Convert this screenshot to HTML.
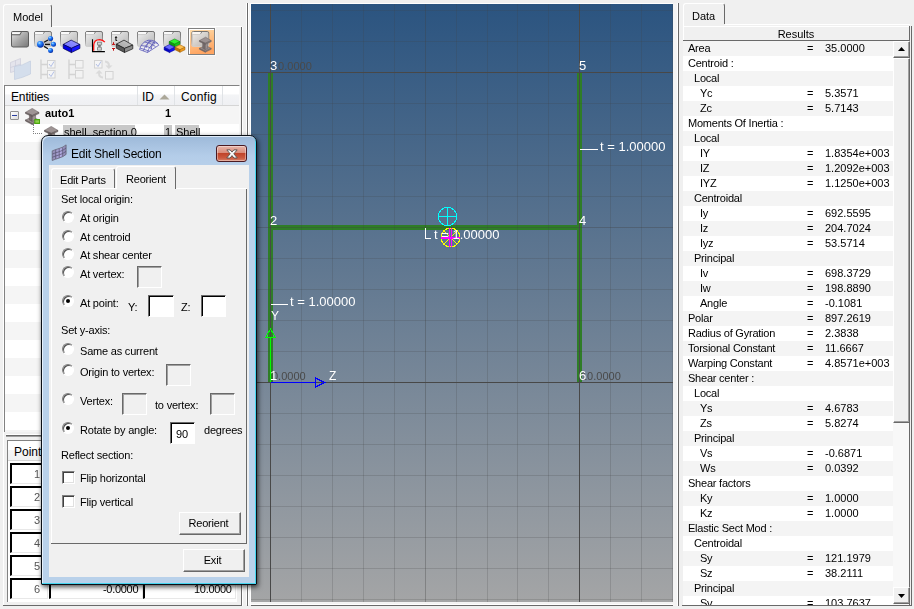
<!DOCTYPE html>
<html><head><meta charset="utf-8">
<style>
*{box-sizing:border-box;margin:0;padding:0}
html,body{width:914px;height:609px;overflow:hidden;background:#f0f0f0}
body{position:relative;font-family:"Liberation Sans",sans-serif;font-size:11px;color:#000}
.a{position:absolute}
.t{position:absolute;white-space:nowrap;line-height:1;will-change:transform}
.lcd{will-change:auto}
.btn{will-change:transform}
/* viewport */
#vp{left:251px;top:4px;width:422px;height:598px;background:linear-gradient(#2b5480 0%,#a4a5a6 100%);overflow:hidden}
#vp .t{color:#fff}
</style></head><body>
<!-- ============ VIEWPORT ============ -->
<div id="vp" class="a">
<svg class="a" style="left:0;top:0" width="422" height="598" shape-rendering="crispEdges"><rect x="17" y="69" width="5" height="309" fill="#2f7d27"/>
<rect x="326" y="69" width="5" height="309" fill="#2f7d27"/>
<rect x="20" y="221" width="308" height="5" fill="#2f7d27"/>
<rect x="19" y="0" width="1" height="598" fill="#484848" opacity="1"/>
<rect x="50" y="0" width="1" height="598" fill="#404040" opacity="0.2"/>
<rect x="81" y="0" width="1" height="598" fill="#404040" opacity="0.2"/>
<rect x="112" y="0" width="1" height="598" fill="#404040" opacity="0.2"/>
<rect x="143" y="0" width="1" height="598" fill="#404040" opacity="0.2"/>
<rect x="174" y="0" width="1" height="598" fill="#404040" opacity="0.33"/>
<rect x="205" y="0" width="1" height="598" fill="#404040" opacity="0.2"/>
<rect x="236" y="0" width="1" height="598" fill="#404040" opacity="0.2"/>
<rect x="266" y="0" width="1" height="598" fill="#404040" opacity="0.2"/>
<rect x="297" y="0" width="1" height="598" fill="#404040" opacity="0.2"/>
<rect x="328" y="0" width="1" height="598" fill="#484848" opacity="1"/>
<rect x="359" y="0" width="1" height="598" fill="#404040" opacity="0.2"/>
<rect x="390" y="0" width="1" height="598" fill="#404040" opacity="0.2"/>
<rect x="421" y="0" width="1" height="598" fill="#404040" opacity="0.2"/>
<rect x="0" y="6" width="422" height="1" fill="#404040" opacity="0.2"/>
<rect x="0" y="37" width="422" height="1" fill="#404040" opacity="0.2"/>
<rect x="0" y="68" width="422" height="1" fill="#484848" opacity="1"/>
<rect x="0" y="99" width="422" height="1" fill="#404040" opacity="0.2"/>
<rect x="0" y="130" width="422" height="1" fill="#404040" opacity="0.2"/>
<rect x="0" y="161" width="422" height="1" fill="#404040" opacity="0.2"/>
<rect x="0" y="192" width="422" height="1" fill="#404040" opacity="0.2"/>
<rect x="0" y="223" width="422" height="1" fill="#404040" opacity="0.33"/>
<rect x="0" y="254" width="422" height="1" fill="#404040" opacity="0.2"/>
<rect x="0" y="285" width="422" height="1" fill="#404040" opacity="0.2"/>
<rect x="0" y="316" width="422" height="1" fill="#404040" opacity="0.2"/>
<rect x="0" y="347" width="422" height="1" fill="#404040" opacity="0.2"/>
<rect x="0" y="378" width="422" height="1" fill="#484848" opacity="1"/>
<rect x="0" y="409" width="422" height="1" fill="#404040" opacity="0.2"/>
<rect x="0" y="440" width="422" height="1" fill="#404040" opacity="0.2"/>
<rect x="0" y="471" width="422" height="1" fill="#404040" opacity="0.2"/>
<rect x="0" y="502" width="422" height="1" fill="#404040" opacity="0.2"/>
<rect x="0" y="533" width="422" height="1" fill="#404040" opacity="0.2"/>
<rect x="0" y="564" width="422" height="1" fill="#404040" opacity="0.2"/>
<rect x="0" y="595" width="422" height="1" fill="#404040" opacity="0.2"/>
<rect x="19" y="334" width="1" height="44" fill="#00ff00"/>
<path d="M19.5 325 L14.5 333.5 L24.5 333.5 Z" fill="none" stroke="#00ff00" stroke-width="1"/>
<rect x="20" y="378" width="45" height="1" fill="#0000ff"/>
<path d="M73.5 378.5 L64.5 374 L64.5 383 Z" fill="none" stroke="#0000ff" stroke-width="1"/>
<rect x="20" y="300" width="17" height="1" fill="#fff"/>
<rect x="329" y="145" width="18" height="1" fill="#fff"/>
<rect x="174" y="224" width="1" height="11" fill="#fff"/>
<rect x="174" y="234" width="6" height="1" fill="#fff"/>
<g fill="none" stroke="#00ffff" stroke-width="1"><circle cx="196.5" cy="212.5" r="9.2"/><path d="M187.3 212.5H205.7M196.5 203.3V221.7"/></g>
<g fill="none" stroke="#ffff00" stroke-width="1"><circle cx="199.5" cy="233.5" r="9.4"/><path d="M192.85326 226.85326L206.14674 240.14674M206.14674 226.85326L192.85326 240.14674"/></g>
<g fill="none" stroke="#ff00ff" stroke-width="1"><path d="M198.5 224.1V242.9M200.5 224.1V242.9M190.1 233.0H208.9M190.1 234.0H208.9"/></g></svg>
<div class="t" style="left:20.5px;top:56.9px;font-size:11px;color:#4a4a4a">10.0000</div>
<div class="t" style="left:18.5px;top:55.2px;font-size:13px;color:#fff">3</div>
<div class="t" style="left:327.5px;top:55.2px;font-size:13px;color:#fff">5</div>
<div class="t" style="left:18.5px;top:210.2px;font-size:13px;color:#fff">2</div>
<div class="t" style="left:327.5px;top:210.2px;font-size:13px;color:#fff">4</div>
<div class="t" style="left:21px;top:366.9px;font-size:11px;color:#4a4a4a">0.0000</div>
<div class="t" style="left:18.5px;top:365.2px;font-size:13px;color:#fff">1</div>
<div class="t" style="left:329.5px;top:366.9px;font-size:11px;color:#4a4a4a">10.0000</div>
<div class="t" style="left:327.5px;top:365.2px;font-size:13px;color:#fff">6</div>
<div class="t" style="left:20px;top:306.0px;font-size:12px;color:#fff">Y</div>
<div class="t" style="left:77.5px;top:366.0px;font-size:12px;color:#fff">Z</div>
<div class="t" style="left:39px;top:291.2px;font-size:13px;color:#fff">t = 1.00000</div>
<div class="t" style="left:349px;top:136.2px;font-size:13px;color:#fff">t = 1.00000</div>
<div class="t" style="left:183px;top:224.2px;font-size:13px;color:#fff">t = 1.00000</div>
</div>
<!--LEFT-->
<!-- ============ LEFT PANEL ============ -->
<style>
.hl{background:#fff}.dk{background:#696969}.sh{background:#a0a0a0}
.tab{border-top:1px solid #fff;border-left:1px solid #fff;border-right:1px solid #696969;border-radius:3px 3px 0 0;background:#f0f0f0}
</style>
<!-- outer separator -->
<div class="a dk" style="left:247px;top:3px;width:1px;height:603px"></div>
<div class="a" style="left:248px;top:3px;width:3px;height:602px;background:linear-gradient(90deg,#fff 0,#fff 1px,#f3f3f3 1px,#f3f3f3 2px,#fff 2px)"></div>
<div class="a" style="left:250px;top:3px;width:424px;height:1px;background:#fff"></div>
<div class="a" style="left:251px;top:602px;width:422px;height:3px;background:linear-gradient(#f3f3f3 0,#f3f3f3 2px,#fff 2px)"></div>
<div class="a hl" style="left:246px;top:3px;width:1px;height:602px"></div>
<div class="a" style="left:673px;top:3px;width:4px;height:603px;background:#f4f4f4"></div>
<div class="a dk" style="left:251px;top:605px;width:422px;height:1px"></div>
<div class="a hl" style="left:242px;top:27px;width:1px;height:579px"></div>
<!-- Model tab -->
<div class="a tab" style="left:3px;top:4px;width:49px;height:23px"></div>
<div class="t" style="left:13px;top:12px;font-size:11px">Model</div>
<div class="a hl" style="left:52px;top:26px;width:190px;height:1px"></div>
<div class="a hl" style="left:3px;top:26px;width:1px;height:579px"></div>
<div class="a dk" style="left:241px;top:27px;width:1px;height:579px"></div>
<div class="a dk" style="left:3px;top:605px;width:239px;height:1px"></div>
<!--TOOLBAR-->
<svg class="a" style="left:4px;top:27px;will-change:transform" width="237" height="58" viewBox="4 27 237 58">
<defs>
<linearGradient id="fg" x1="0" y1="0" x2="1" y2="1"><stop offset="0" stop-color="#e6e6e6"/><stop offset=".5" stop-color="#a9a9a9"/><stop offset="1" stop-color="#787878"/></linearGradient>
<linearGradient id="fg2" x1="0" y1="0" x2="1" y2="1"><stop offset="0" stop-color="#f2f2f2"/><stop offset=".5" stop-color="#d2d2d2"/><stop offset="1" stop-color="#b4b4b4"/></linearGradient>
<linearGradient id="fs2" x1="0" y1="0" x2="0" y2="1"><stop offset="0" stop-color="#6c6c6c"/><stop offset=".6" stop-color="#9a9a9a"/><stop offset="1" stop-color="#d0d0d0"/></linearGradient>
<linearGradient id="og" x1="0" y1="0" x2=".3" y2="1"><stop offset="0" stop-color="#ffe2b2"/><stop offset=".5" stop-color="#ffc388"/><stop offset="1" stop-color="#ffa562"/></linearGradient>
<radialGradient id="sp" cx=".36" cy=".3" r=".75"><stop offset="0" stop-color="#b8e6ff"/><stop offset=".3" stop-color="#2f8fff"/><stop offset=".75" stop-color="#0b48cc"/><stop offset="1" stop-color="#08288c"/></radialGradient>
<linearGradient id="bt" x1="0" y1="1" x2="1" y2="0"><stop offset="0" stop-color="#6a6aff"/><stop offset="1" stop-color="#9c9cff"/></linearGradient>
<linearGradient id="gt" x1="0" y1="1" x2="1" y2="0"><stop offset="0" stop-color="#a4a4a4"/><stop offset="1" stop-color="#c8c8c8"/></linearGradient>
<g id="fold"><rect x=".5" y=".5" width="17" height="15" rx="1.6" stroke-width="1"/><path d="M1.1 1.1H10.2L9 3.1H1.1Z" fill="#fafafa" stroke="none"/><path d="M.8 3.6H8.8L10.4 1" fill="none" stroke-width="1"/></g>
</defs>
<!-- 1 plain folder -->
<g transform="translate(11,31) scale(1,1.03)" fill="url(#fg)" stroke="#5e5e5e"><use href="#fold"/></g>
<!-- 2 folder + spheres -->
<g transform="translate(34,31)" fill="url(#fg2)" stroke="url(#fs2)"><use href="#fold"/></g>
<path d="M44 42.2L48 40M45 44.3H50M44 46.4L48 48.8" stroke="#111" stroke-width="1.3" fill="none"/>
<circle cx="40.4" cy="44.3" r="3.4" fill="url(#sp)"/><circle cx="50.6" cy="38.4" r="2.5" fill="url(#sp)"/><circle cx="53.5" cy="44.3" r="2.5" fill="url(#sp)"/><circle cx="50.6" cy="50.4" r="2.5" fill="url(#sp)"/>
<!-- 3 folder + blue box -->
<g transform="translate(60,31)" fill="url(#fg2)" stroke="url(#fs2)"><use href="#fold"/></g>
<g stroke="#00004a" stroke-width=".7" stroke-linejoin="round"><path d="M63.2 44.4L71.1 40.1L79.9 44.4L71.4 48.3Z" fill="url(#bt)"/><path d="M63.2 44.4L71.4 48.3V52.6L63.2 48.4Z" fill="#0000e6"/><path d="M79.9 44.4L71.4 48.3V52.6L79.9 48.4Z" fill="#1414ff"/></g>
<!-- 4 folder + arc -->
<g transform="translate(85,31)" fill="url(#fg2)" stroke="url(#fs2)"><use href="#fold"/></g>
<path d="M93 51V44Q93.5 40 99.5 39.8Q103 40 104.6 42.5V51Z" fill="#eef4f4" opacity=".8"/>
<path d="M92.5 39.2V51.6H104.9" stroke="#000" stroke-width="1.1" fill="none"/>
<path d="M93.7 50.7V45Q94 39.6 99.6 39.6Q103 39.8 104.8 42.2" stroke="#ff1010" stroke-width="1.3" fill="none"/>
<path d="M97.1 41.8h4.7v3l-1.4 1.4 1.4 1.4v3h-4.7v-3l1.4-1.4-1.4-1.4z" fill="#7e7e7e"/><rect x="98" y="42.6" width="2.9" height="2" fill="#d4d4d4"/><rect x="98" y="47.6" width="2.9" height="2.2" fill="#d4d4d4"/>
<!-- 5 folder + t + gray box -->
<g transform="translate(111,31)" fill="url(#fg2)" stroke="url(#fs2)"><use href="#fold"/></g>
<text x="114.8" y="40.8" font-family="Liberation Sans" font-weight="bold" font-size="8" fill="#000" stroke="#f4f4f4" stroke-width=".8" paint-order="stroke">t</text>
<path d="M113.5 42.2V44.4M112 44.4h3.1M112 48.5h3.1M113.5 48.5V50.7" stroke="#c41010" stroke-width="1" fill="none"/>
<g stroke="#161616" stroke-width=".7" stroke-linejoin="round"><path d="M116.3 44.2L124 40.1L132.8 45.1L124.5 48.4Z" fill="url(#gt)"/><path d="M116.3 44.2L124.5 48.4V52.5L116.3 48.2Z" fill="#585858"/><path d="M132.8 45.1L124.5 48.4V52.5L132.8 48.8Z" fill="#8c8c8c"/></g>
<!-- 6 folder + wire dome -->
<g transform="translate(137,31)" fill="url(#fg2)" stroke="url(#fs2)"><use href="#fold"/></g>
<g stroke="#5c5ab8" stroke-width=".8" fill="rgba(238,238,250,.55)" stroke-linejoin="round">
<path d="M139.5 49.5Q141.5 42 148.5 40.2Q156 39.8 158.8 45.2L147.5 52.5Z"/>
<path d="M143.5 51Q145 44 151 41.5M147.5 52.5Q148.5 46.5 155 43M141 45.5Q146 45.5 152 48.5M144.5 42Q150 42.5 155.5 46.5M147 40.6L158 43.5M140 48L149.5 51.2M150.5 40.1Q147 43 146 48M154.5 40.8Q151.5 44 151 49.5" fill="none"/>
</g>
<!-- 7 folder + 3 boxes -->
<g transform="translate(163,31)" fill="url(#fg2)" stroke="url(#fs2)"><use href="#fold"/></g>
<g stroke-width=".5" stroke-linejoin="round">
<g stroke="#067006"><path d="M169.2 41.6L174.6 38.9L180 41.6L174.6 44.2Z" fill="#30f030"/><path d="M169.2 41.6L174.6 44.2V46.8L169.2 44.2Z" fill="#0ca00c"/><path d="M180 41.6L174.6 44.2V46.8L180 44.2Z" fill="#12c812"/></g>
<g stroke="#000090"><path d="M164.1 47.2L169.5 44.5L174.8 47.2L169.5 49.9Z" fill="#6666ff"/><path d="M164.1 47.2L169.5 49.9V52.6L164.1 49.9Z" fill="#0000c8"/><path d="M174.8 47.2L169.5 49.9V52.6L174.8 49.9Z" fill="#1010ee"/></g>
<g stroke="#9a5a00"><path d="M175 47.2L180 44.8L185 47.2L180 49.7Z" fill="#ffc050"/><path d="M175 47.2L180 49.7V52.3L175 49.8Z" fill="#c07408"/><path d="M185 47.2L180 49.7V52.3L185 49.8Z" fill="#ee9818"/></g>
</g>
<!-- 8 selected -->
<rect x="188.5" y="28.5" width="26" height="26" fill="url(#og)" stroke="#808080" stroke-width="1"/>
<path d="M189.5 54V29.5H214" stroke="#fff" stroke-width="1" fill="none"/>
<rect x="187.5" y="27.5" width="28" height="28" fill="none" stroke="#fafafa" stroke-width="1"/>
<g transform="translate(191.3,31)" fill="url(#fg2)" stroke="url(#fs2)" opacity=".92"><use href="#fold"/></g>
<g stroke="#6c6262" stroke-width=".5" stroke-linejoin="round">
<path d="M199.4 48.3L205.3 45.4L211.2 48.3L205.3 51.2Z" fill="#9a9090"/><path d="M199.4 48.3L205.3 51.2V52.2L199.4 49.3Z" fill="#6e6565"/><path d="M211.2 48.3L205.3 51.2V52.2L211.2 49.3Z" fill="#857c7c"/>
<path d="M202.7 42.4L205.3 43.6V49.6L202.7 48.4Z" fill="#766c6c"/><path d="M207.6 42.4L205.3 43.6V49.6L207.6 48.4Z" fill="#9a9090"/>
<path d="M199.4 40.6L205.6 37.2L211.2 40.6L205.3 43.2Z" fill="#9c9292"/><path d="M199.4 40.6L205.3 43.2V44.3L199.4 41.7Z" fill="#6e6565"/><path d="M211.2 40.6L205.3 43.2V44.3L211.2 41.7Z" fill="#857c7c"/>
</g>
<!-- row 2 disabled -->
<g opacity=".6">
<path d="M10.5 62.5L20.5 58.5V69.5L10.5 72.5Z" fill="#dcdcea" stroke="#b4b4cc" stroke-width=".7"/><path d="M10.5 67.5L20.5 64M15.5 60.5V71" stroke="#b4b4cc" stroke-width=".7" fill="none"/>
<path d="M14.5 66.5Q22 66 30.5 61V74Q22 78 14.5 79.5Z" fill="#c2d2ea" stroke="#a4b6d4" stroke-width=".7"/>
</g>
<g opacity=".6" fill="none" stroke="#c0c0c0">
<path d="M41 59.5V79M41 64.5H47M41 74.5H47" stroke-width="1.4"/><rect x="47.5" y="60.5" width="7.5" height="7.5" fill="#f8f8f8"/><rect x="47.5" y="70.5" width="7.5" height="7.5" fill="#f8f8f8"/>
<path d="M49 64L51 66.5L54 61.5M49 74L51 76.5L54 71.5" stroke="#8aa0e0" stroke-width="1"/>
<path d="M69 59.5V79M69 64.5H75M69 74.5H75" stroke-width="1.4"/><rect x="75.5" y="60.5" width="7.5" height="7.5" fill="#f4f4f4"/><rect x="75.5" y="70.5" width="7.5" height="7.5" fill="#f4f4f4"/>
<rect x="94.5" y="60.5" width="7.5" height="7.5" fill="#f8f8f8"/><path d="M96 64L98 66.5L101 61.5" stroke="#8aa0e0" stroke-width="1"/>
<rect x="105.5" y="71.5" width="7.5" height="7.5" fill="#f4f4f4"/>
<path d="M105 60.5Q110 61 110 65.5H112.5L108.8 69L105.5 65.5H108Q108 63 105 62.5Z" fill="#cccccc" stroke="none"/>
<path d="M103 78.5Q98 78 98 73.5H95.5L99.2 70L102.5 73.5H100Q100 76 103 76.5Z" fill="#cccccc" stroke="none"/>
</g>
</svg>
<!--/TOOLBAR-->
<!-- tree frame -->
<div class="a" style="left:4px;top:85px;width:236px;height:347px;border-top:1px solid #828282;border-left:1px solid #828282;border-right:1px solid #f8f8f8;background:#fff;overflow:hidden">
  <div class="a" style="left:0;top:0;width:236px;height:20px;background:linear-gradient(#fff 0%,#fff 42%,#f3f4f6 47%,#eff0f3 100%);border-bottom:1px solid #d5d5d5"></div>
  <div class="a" style="left:132px;top:0;width:1px;height:19px;background:#e0e3e6"></div>
  <div class="a" style="left:169px;top:0;width:1px;height:19px;background:#e0e3e6"></div>
  <div class="a" style="left:217px;top:0;width:1px;height:19px;background:#e0e3e6"></div>
  <div class="t lcd" style="left:6px;top:5px;font-size:12px;letter-spacing:-0.15px">Entities</div>
  <div class="t lcd" style="left:137px;top:5px;font-size:12px">ID</div>
  <svg class="a" style="left:154px;top:8px" width="11" height="6"><path d="M0.5 5.5L5.5 0.5L10.5 5.5Z" fill="#aca899"/></svg>
  <div class="t lcd" style="left:176px;top:5px;font-size:12px;letter-spacing:0.2px">Config</div>
  <!-- stripes -->
  <div class="a" style="left:0;top:20px;width:236px;height:330px;background:repeating-linear-gradient(#f5f5f5 0,#f5f5f5 18px,#fff 18px,#fff 36px)"></div>
  <!-- row 1 -->
  <div class="a" style="left:5px;top:25px;width:9px;height:9px;border:1px solid #919191;background:linear-gradient(135deg,#fff,#dcdcdc);border-radius:1px"></div>
  <div class="a" style="left:7px;top:29px;width:5px;height:1px;background:#2a3fa0"></div>
  <svg class="a" style="left:20px;top:22px" width="16" height="17" viewBox="0 0 16 17"><g stroke="#5e5555" stroke-width=".5" stroke-linejoin="round"><path d="M.4 12L7.2 8.8L14 12L7.2 15.6Z" fill="#9a9090"/><path d="M.4 12L7.2 15.6V16.6L.4 13Z" fill="#6e6565"/><path d="M14 12L7.2 15.6V16.6L14 13Z" fill="#857c7c"/><path d="M4.4 6L7.2 7.4V13.4L4.4 12Z" fill="#766c6c"/><path d="M10.6 6L7.2 7.4V13.4L10.6 12Z" fill="#9c9292"/><path d="M.4 4.4L7.2 .4L14 4.4L7.2 7.4Z" fill="#9e9494"/><path d="M.4 4.4L7.2 7.4V8.5L.4 5.5Z" fill="#6e6565"/><path d="M14 4.4L7.2 7.4V8.5L14 5.5Z" fill="#857c7c"/></g><rect x="9.3" y="11" width="5.7" height="5" fill="#4aa80e"/><rect x="10.3" y="12.6" width="3.7" height="1" fill="#bfe87a"/><rect x="10.3" y="14.2" width="3.7" height=".8" fill="#8ad040"/></svg>
  <div class="t" style="left:40px;top:22px;font-size:11px;font-weight:bold">auto1</div>
  <div class="t" style="left:160px;top:22px;font-size:11px;font-weight:bold">1</div>
  <!-- row 2 -->
  <div class="a" style="left:28px;top:38px;width:1px;height:10px;border-left:1px dotted #808080"></div>
  <div class="a" style="left:28px;top:47px;width:9px;height:1px;border-top:1px dotted #808080"></div>
  <svg class="a" style="left:39px;top:40px" width="16" height="17" viewBox="0 0 16 17"><g stroke="#5e5555" stroke-width=".5" stroke-linejoin="round"><path d="M.4 12L7.2 8.8L14 12L7.2 15.6Z" fill="#9a9090"/><path d="M.4 12L7.2 15.6V16.6L.4 13Z" fill="#6e6565"/><path d="M14 12L7.2 15.6V16.6L14 13Z" fill="#857c7c"/><path d="M4.4 6L7.2 7.4V13.4L4.4 12Z" fill="#766c6c"/><path d="M10.6 6L7.2 7.4V13.4L10.6 12Z" fill="#9c9292"/><path d="M.4 4.4L7.2 .4L14 4.4L7.2 7.4Z" fill="#9e9494"/><path d="M.4 4.4L7.2 7.4V8.5L.4 5.5Z" fill="#6e6565"/><path d="M14 4.4L7.2 7.4V8.5L14 5.5Z" fill="#857c7c"/></g></svg>
  <div class="a" style="left:58px;top:39px;width:72px;height:17px;background:#c8c8c8"></div>
  <div class="t" style="left:59px;top:41px;font-size:11px">shell_section.0</div>
  <div class="a" style="left:159px;top:39px;width:8px;height:17px;background:#c8c8c8"></div>
  <div class="t" style="left:160px;top:41px;font-size:11px">1</div>
  <div class="a" style="left:170px;top:39px;width:24px;height:17px;background:#c8c8c8"></div>
  <div class="t" style="left:171px;top:41px;font-size:11px">Shell</div>
</div>
<!-- splitter -->
<div class="a hl" style="left:6px;top:434px;width:235px;height:1px"></div>
<div class="a dk" style="left:6px;top:435px;width:235px;height:1px"></div>
<div class="a sh" style="left:6px;top:436px;width:235px;height:1px"></div>
<!-- points table -->
<div class="a" style="left:7px;top:440px;width:230px;height:162px;border-top:1px solid #828282;border-left:1px solid #828282;background:#fff;overflow:hidden" id="pts">
  <div class="a" style="left:0;top:0;width:229px;height:20px;background:linear-gradient(#fff 0%,#fff 45%,#f4f5f6 50%,#f0f1f2 100%);border-bottom:1px solid #d5d5d5"></div>
  <div class="t lcd" style="left:6px;top:5px;font-size:12px">Point</div>
  <div class="a" style="left:2px;top:22px;width:38px;height:21px;border-top:2px solid #000;border-left:2px solid #000;border-right:1px solid #e8e8e8;border-bottom:1px solid #e8e8e8;background:#fff"><div class="t" style="right:7px;top:4px;font-size:11px;letter-spacing:-0.3px;color:#555">1</div></div><div class="a" style="left:41px;top:22px;width:94px;height:21px;border-top:2px solid #000;border-left:2px solid #000;border-right:1px solid #e8e8e8;border-bottom:1px solid #e8e8e8;background:#fff"><div class="t" style="right:4px;top:4px;font-size:11px;letter-spacing:-0.3px;color:#000"></div></div><div class="a" style="left:135px;top:22px;width:94px;height:21px;border-top:2px solid #000;border-left:2px solid #000;border-right:1px solid #e8e8e8;border-bottom:1px solid #e8e8e8;background:#fff"><div class="t" style="right:4px;top:4px;font-size:11px;letter-spacing:-0.3px;color:#000"></div></div>
<div class="a" style="left:2px;top:45px;width:38px;height:21px;border-top:2px solid #000;border-left:2px solid #000;border-right:1px solid #e8e8e8;border-bottom:1px solid #e8e8e8;background:#fff"><div class="t" style="right:7px;top:4px;font-size:11px;letter-spacing:-0.3px;color:#555">2</div></div><div class="a" style="left:41px;top:45px;width:94px;height:21px;border-top:2px solid #000;border-left:2px solid #000;border-right:1px solid #e8e8e8;border-bottom:1px solid #e8e8e8;background:#fff"><div class="t" style="right:4px;top:4px;font-size:11px;letter-spacing:-0.3px;color:#000"></div></div><div class="a" style="left:135px;top:45px;width:94px;height:21px;border-top:2px solid #000;border-left:2px solid #000;border-right:1px solid #e8e8e8;border-bottom:1px solid #e8e8e8;background:#fff"><div class="t" style="right:4px;top:4px;font-size:11px;letter-spacing:-0.3px;color:#000"></div></div>
<div class="a" style="left:2px;top:68px;width:38px;height:21px;border-top:2px solid #000;border-left:2px solid #000;border-right:1px solid #e8e8e8;border-bottom:1px solid #e8e8e8;background:#fff"><div class="t" style="right:7px;top:4px;font-size:11px;letter-spacing:-0.3px;color:#555">3</div></div><div class="a" style="left:41px;top:68px;width:94px;height:21px;border-top:2px solid #000;border-left:2px solid #000;border-right:1px solid #e8e8e8;border-bottom:1px solid #e8e8e8;background:#fff"><div class="t" style="right:4px;top:4px;font-size:11px;letter-spacing:-0.3px;color:#000"></div></div><div class="a" style="left:135px;top:68px;width:94px;height:21px;border-top:2px solid #000;border-left:2px solid #000;border-right:1px solid #e8e8e8;border-bottom:1px solid #e8e8e8;background:#fff"><div class="t" style="right:4px;top:4px;font-size:11px;letter-spacing:-0.3px;color:#000"></div></div>
<div class="a" style="left:2px;top:91px;width:38px;height:21px;border-top:2px solid #000;border-left:2px solid #000;border-right:1px solid #e8e8e8;border-bottom:1px solid #e8e8e8;background:#fff"><div class="t" style="right:7px;top:4px;font-size:11px;letter-spacing:-0.3px;color:#555">4</div></div><div class="a" style="left:41px;top:91px;width:94px;height:21px;border-top:2px solid #000;border-left:2px solid #000;border-right:1px solid #e8e8e8;border-bottom:1px solid #e8e8e8;background:#fff"><div class="t" style="right:4px;top:4px;font-size:11px;letter-spacing:-0.3px;color:#000"></div></div><div class="a" style="left:135px;top:91px;width:94px;height:21px;border-top:2px solid #000;border-left:2px solid #000;border-right:1px solid #e8e8e8;border-bottom:1px solid #e8e8e8;background:#fff"><div class="t" style="right:4px;top:4px;font-size:11px;letter-spacing:-0.3px;color:#000"></div></div>
<div class="a" style="left:2px;top:114px;width:38px;height:21px;border-top:2px solid #000;border-left:2px solid #000;border-right:1px solid #e8e8e8;border-bottom:1px solid #e8e8e8;background:#fff"><div class="t" style="right:7px;top:4px;font-size:11px;letter-spacing:-0.3px;color:#555">5</div></div><div class="a" style="left:41px;top:114px;width:94px;height:21px;border-top:2px solid #000;border-left:2px solid #000;border-right:1px solid #e8e8e8;border-bottom:1px solid #e8e8e8;background:#fff"><div class="t" style="right:4px;top:4px;font-size:11px;letter-spacing:-0.3px;color:#000"></div></div><div class="a" style="left:135px;top:114px;width:94px;height:21px;border-top:2px solid #000;border-left:2px solid #000;border-right:1px solid #e8e8e8;border-bottom:1px solid #e8e8e8;background:#fff"><div class="t" style="right:4px;top:4px;font-size:11px;letter-spacing:-0.3px;color:#000"></div></div>
<div class="a" style="left:2px;top:137px;width:38px;height:21px;border-top:2px solid #000;border-left:2px solid #000;border-right:1px solid #e8e8e8;border-bottom:1px solid #e8e8e8;background:#fff"><div class="t" style="right:7px;top:4px;font-size:11px;letter-spacing:-0.3px;color:#555">6</div></div><div class="a" style="left:41px;top:137px;width:94px;height:21px;border-top:2px solid #000;border-left:2px solid #000;border-right:1px solid #e8e8e8;border-bottom:1px solid #e8e8e8;background:#fff"><div class="t" style="right:4px;top:4px;font-size:11px;letter-spacing:-0.3px;color:#000">-0.0000</div></div><div class="a" style="left:135px;top:137px;width:93px;height:21px;border-top:2px solid #000;border-left:2px solid #000;border-right:1px solid #e8e8e8;border-bottom:1px solid #e8e8e8;background:#fff"><div class="t" style="right:3px;top:4px;font-size:11px;letter-spacing:-0.3px;color:#000">10.0000</div></div>

</div>
<!--RIGHT-->
<!-- ============ RIGHT PANEL ============ -->
<div class="a hl" style="left:677px;top:3px;width:1px;height:603px"></div>
<div class="a dk" style="left:678px;top:3px;width:1px;height:603px"></div>
<div class="a tab" style="left:683px;top:3px;width:42px;height:21px"></div>
<div class="t" style="left:692px;top:11px;font-size:11px">Data</div>
<div class="a hl" style="left:725px;top:24px;width:185px;height:1px"></div>
<div class="a hl" style="left:683px;top:26px;width:226px;height:1px"></div>
<div class="a hl" style="left:683px;top:24px;width:1px;height:581px"></div>
<div class="a dk" style="left:909px;top:26px;width:1px;height:580px"></div>
<div class="a dk" style="left:911px;top:26px;width:1px;height:580px"></div>
<div class="a dk" style="left:682px;top:605px;width:230px;height:1px"></div>
<div class="t" style="left:683px;top:29px;width:226px;text-align:center;font-size:11px">Results</div>
<div class="a" style="left:683px;top:40px;width:226px;height:1px;background:#696969"></div>
<div class="a" id="res" style="left:683px;top:41px;width:210px;height:564px;overflow:hidden;background:#fff;font-size:11px">
<div class="a" style="left:0;top:0px;width:210px;height:15px;background:#f4f4f4"><div class="t" style="left:5px;top:2px;letter-spacing:-0.22px">Area</div><div class="t" style="left:124px;top:2px">=</div><div class="t" style="left:142px;top:2px">35.0000</div></div>
<div class="a" style="left:0;top:15px;width:210px;height:15px;background:#fff"><div class="t" style="left:5px;top:2px;letter-spacing:-0.22px">Centroid :</div></div>
<div class="a" style="left:0;top:30px;width:210px;height:15px;background:#f4f4f4"><div class="t" style="left:11px;top:2px;letter-spacing:-0.22px">Local</div></div>
<div class="a" style="left:0;top:45px;width:210px;height:15px;background:#fff"><div class="t" style="left:17px;top:2px;letter-spacing:-0.22px">Yc</div><div class="t" style="left:124px;top:2px">=</div><div class="t" style="left:142px;top:2px">5.3571</div></div>
<div class="a" style="left:0;top:60px;width:210px;height:15px;background:#f4f4f4"><div class="t" style="left:17px;top:2px;letter-spacing:-0.22px">Zc</div><div class="t" style="left:124px;top:2px">=</div><div class="t" style="left:142px;top:2px">5.7143</div></div>
<div class="a" style="left:0;top:75px;width:210px;height:15px;background:#fff"><div class="t" style="left:5px;top:2px;letter-spacing:-0.22px">Moments Of Inertia :</div></div>
<div class="a" style="left:0;top:90px;width:210px;height:15px;background:#f4f4f4"><div class="t" style="left:11px;top:2px;letter-spacing:-0.22px">Local</div></div>
<div class="a" style="left:0;top:105px;width:210px;height:15px;background:#fff"><div class="t" style="left:17px;top:2px;letter-spacing:-0.22px">IY</div><div class="t" style="left:124px;top:2px">=</div><div class="t" style="left:142px;top:2px">1.8354e+003</div></div>
<div class="a" style="left:0;top:120px;width:210px;height:15px;background:#f4f4f4"><div class="t" style="left:17px;top:2px;letter-spacing:-0.22px">IZ</div><div class="t" style="left:124px;top:2px">=</div><div class="t" style="left:142px;top:2px">1.2092e+003</div></div>
<div class="a" style="left:0;top:135px;width:210px;height:15px;background:#fff"><div class="t" style="left:17px;top:2px;letter-spacing:-0.22px">IYZ</div><div class="t" style="left:124px;top:2px">=</div><div class="t" style="left:142px;top:2px">1.1250e+003</div></div>
<div class="a" style="left:0;top:150px;width:210px;height:15px;background:#f4f4f4"><div class="t" style="left:11px;top:2px;letter-spacing:-0.22px">Centroidal</div></div>
<div class="a" style="left:0;top:165px;width:210px;height:15px;background:#fff"><div class="t" style="left:17px;top:2px;letter-spacing:-0.22px">Iy</div><div class="t" style="left:124px;top:2px">=</div><div class="t" style="left:142px;top:2px">692.5595</div></div>
<div class="a" style="left:0;top:180px;width:210px;height:15px;background:#f4f4f4"><div class="t" style="left:17px;top:2px;letter-spacing:-0.22px">Iz</div><div class="t" style="left:124px;top:2px">=</div><div class="t" style="left:142px;top:2px">204.7024</div></div>
<div class="a" style="left:0;top:195px;width:210px;height:15px;background:#fff"><div class="t" style="left:17px;top:2px;letter-spacing:-0.22px">Iyz</div><div class="t" style="left:124px;top:2px">=</div><div class="t" style="left:142px;top:2px">53.5714</div></div>
<div class="a" style="left:0;top:210px;width:210px;height:15px;background:#f4f4f4"><div class="t" style="left:11px;top:2px;letter-spacing:-0.22px">Principal</div></div>
<div class="a" style="left:0;top:225px;width:210px;height:15px;background:#fff"><div class="t" style="left:17px;top:2px;letter-spacing:-0.22px">Iv</div><div class="t" style="left:124px;top:2px">=</div><div class="t" style="left:142px;top:2px">698.3729</div></div>
<div class="a" style="left:0;top:240px;width:210px;height:15px;background:#f4f4f4"><div class="t" style="left:17px;top:2px;letter-spacing:-0.22px">Iw</div><div class="t" style="left:124px;top:2px">=</div><div class="t" style="left:142px;top:2px">198.8890</div></div>
<div class="a" style="left:0;top:255px;width:210px;height:15px;background:#fff"><div class="t" style="left:17px;top:2px;letter-spacing:-0.22px">Angle</div><div class="t" style="left:124px;top:2px">=</div><div class="t" style="left:142px;top:2px">-0.1081</div></div>
<div class="a" style="left:0;top:270px;width:210px;height:15px;background:#f4f4f4"><div class="t" style="left:5px;top:2px;letter-spacing:-0.22px">Polar</div><div class="t" style="left:124px;top:2px">=</div><div class="t" style="left:142px;top:2px">897.2619</div></div>
<div class="a" style="left:0;top:285px;width:210px;height:15px;background:#fff"><div class="t" style="left:5px;top:2px;letter-spacing:-0.22px">Radius of Gyration</div><div class="t" style="left:124px;top:2px">=</div><div class="t" style="left:142px;top:2px">2.3838</div></div>
<div class="a" style="left:0;top:300px;width:210px;height:15px;background:#f4f4f4"><div class="t" style="left:5px;top:2px;letter-spacing:-0.22px">Torsional Constant</div><div class="t" style="left:124px;top:2px">=</div><div class="t" style="left:142px;top:2px">11.6667</div></div>
<div class="a" style="left:0;top:315px;width:210px;height:15px;background:#fff"><div class="t" style="left:5px;top:2px;letter-spacing:-0.22px">Warping Constant</div><div class="t" style="left:124px;top:2px">=</div><div class="t" style="left:142px;top:2px">4.8571e+003</div></div>
<div class="a" style="left:0;top:330px;width:210px;height:15px;background:#f4f4f4"><div class="t" style="left:5px;top:2px;letter-spacing:-0.22px">Shear center :</div></div>
<div class="a" style="left:0;top:345px;width:210px;height:15px;background:#fff"><div class="t" style="left:11px;top:2px;letter-spacing:-0.22px">Local</div></div>
<div class="a" style="left:0;top:360px;width:210px;height:15px;background:#f4f4f4"><div class="t" style="left:17px;top:2px;letter-spacing:-0.22px">Ys</div><div class="t" style="left:124px;top:2px">=</div><div class="t" style="left:142px;top:2px">4.6783</div></div>
<div class="a" style="left:0;top:375px;width:210px;height:15px;background:#fff"><div class="t" style="left:17px;top:2px;letter-spacing:-0.22px">Zs</div><div class="t" style="left:124px;top:2px">=</div><div class="t" style="left:142px;top:2px">5.8274</div></div>
<div class="a" style="left:0;top:390px;width:210px;height:15px;background:#f4f4f4"><div class="t" style="left:11px;top:2px;letter-spacing:-0.22px">Principal</div></div>
<div class="a" style="left:0;top:405px;width:210px;height:15px;background:#fff"><div class="t" style="left:17px;top:2px;letter-spacing:-0.22px">Vs</div><div class="t" style="left:124px;top:2px">=</div><div class="t" style="left:142px;top:2px">-0.6871</div></div>
<div class="a" style="left:0;top:420px;width:210px;height:15px;background:#f4f4f4"><div class="t" style="left:17px;top:2px;letter-spacing:-0.22px">Ws</div><div class="t" style="left:124px;top:2px">=</div><div class="t" style="left:142px;top:2px">0.0392</div></div>
<div class="a" style="left:0;top:435px;width:210px;height:15px;background:#fff"><div class="t" style="left:5px;top:2px;letter-spacing:-0.22px">Shear factors</div></div>
<div class="a" style="left:0;top:450px;width:210px;height:15px;background:#f4f4f4"><div class="t" style="left:17px;top:2px;letter-spacing:-0.22px">Ky</div><div class="t" style="left:124px;top:2px">=</div><div class="t" style="left:142px;top:2px">1.0000</div></div>
<div class="a" style="left:0;top:465px;width:210px;height:15px;background:#fff"><div class="t" style="left:17px;top:2px;letter-spacing:-0.22px">Kz</div><div class="t" style="left:124px;top:2px">=</div><div class="t" style="left:142px;top:2px">1.0000</div></div>
<div class="a" style="left:0;top:480px;width:210px;height:15px;background:#f4f4f4"><div class="t" style="left:5px;top:2px;letter-spacing:-0.22px">Elastic Sect Mod :</div></div>
<div class="a" style="left:0;top:495px;width:210px;height:15px;background:#fff"><div class="t" style="left:11px;top:2px;letter-spacing:-0.22px">Centroidal</div></div>
<div class="a" style="left:0;top:510px;width:210px;height:15px;background:#f4f4f4"><div class="t" style="left:17px;top:2px;letter-spacing:-0.22px">Sy</div><div class="t" style="left:124px;top:2px">=</div><div class="t" style="left:142px;top:2px">121.1979</div></div>
<div class="a" style="left:0;top:525px;width:210px;height:15px;background:#fff"><div class="t" style="left:17px;top:2px;letter-spacing:-0.22px">Sz</div><div class="t" style="left:124px;top:2px">=</div><div class="t" style="left:142px;top:2px">38.2111</div></div>
<div class="a" style="left:0;top:540px;width:210px;height:15px;background:#f4f4f4"><div class="t" style="left:11px;top:2px;letter-spacing:-0.22px">Principal</div></div>
<div class="a" style="left:0;top:555px;width:210px;height:15px;background:#fff"><div class="t" style="left:17px;top:2px;letter-spacing:-0.22px">Sv</div><div class="t" style="left:124px;top:2px">=</div><div class="t" style="left:142px;top:2px">103.7637</div></div>
</div>
<div class="a" style="left:893px;top:41px;width:16px;height:564px;background:#f8f8f8"></div>
<div class="a sb" style="left:893px;top:41px;height:17px"><svg class="a" style="left:4px;top:5px" width="7" height="4"><path d="M0 4L3.5 0L7 4Z" fill="#000"/></svg></div>
<div class="a sb" style="left:893px;top:58px;height:365px"></div>
<div class="a sb" style="left:893px;top:587px;height:17px"><svg class="a" style="left:4px;top:6px" width="7" height="4"><path d="M0 0L3.5 4L7 0Z" fill="#000"/></svg></div>
<style>.sb{width:17px;background:#f0f0f0;border-top:1px solid #fff;border-left:1px solid #fff;border-right:1px solid #696969;border-bottom:1px solid #696969;box-shadow:inset -1px -1px 0 #a0a0a0}</style>
<!--DIALOG-->
<!-- ============ DIALOG ============ -->
<style>
#dlg{left:41px;top:135px;width:216px;height:450px;border-radius:7px 7px 1px 1px;background:linear-gradient(180deg,#9db9d9 0,#b4cde9 20px,#b9d1ea 36px,#b9d1ea 100%);border:1px solid #0a0f16;box-shadow:1px 2px 5px rgba(0,0,0,.7), inset -1px -1px 0 #45d6f0, inset 1px 1px 0 rgba(240,248,255,.8)}
#dlg .cl{left:7px;top:29px;width:200px;height:412px;background:#f0f0f0;border:0}
.rad{position:absolute;width:12px;height:12px;border-radius:50%;background:#fff;border:1px solid;border-color:#808080 #fff #fff #808080;box-shadow:inset 1px 1px 0 #505050}
.rad.on::after{content:"";position:absolute;left:3px;top:3px;width:4px;height:4px;border-radius:50%;background:#000}
.ent{position:absolute;background:#f0f0f0;border-top:1px solid #696969;border-left:1px solid #696969;border-right:1px solid #fff;border-bottom:1px solid #fff;box-shadow:inset 1px 1px 0 #a0a0a0}
.ent.w{background:#fff;box-shadow:inset 1px 1px 0 #000}
.chk{position:absolute;width:13px;height:13px;background:#fff;border-top:1px solid #808080;border-left:1px solid #808080;border-right:1px solid #fff;border-bottom:1px solid #fff;box-shadow:inset 1px 1px 0 #404040, inset -1px -1px 0 #e0e0e0}
.btn{position:absolute;width:62px;height:23px;background:#f0f0f0;border-top:1px solid #fff;border-left:1px solid #fff;border-right:1px solid #696969;border-bottom:1px solid #696969;box-shadow:inset -1px -1px 0 #a0a0a0;font-size:11px;text-align:center;line-height:20px;letter-spacing:-0.2px;padding-right:3px}
#dlg .t{font-size:11px;letter-spacing:-0.2px}
</style>
<div id="dlg" class="a">
  <!-- title -->
  <svg class="a" style="left:9px;top:8px" width="17" height="18" viewBox="0 0 17 18"><defs><linearGradient id="mg" x1="0" y1="0" x2="1" y2="0"><stop offset="0" stop-color="#8d89b0"/><stop offset=".6" stop-color="#b2aae2"/><stop offset="1" stop-color="#8682aa"/></linearGradient></defs><path d="M1.2 6.9C5 5 11 4.5 15.1 .9V10.4C11 14 5 14.6 1.2 16.5Z" fill="url(#mg)" stroke="#686678" stroke-width=".8"/><path d="M1.2 10.1C5 8.2 11 7.7 15.1 4.1M1.2 13.3C5 11.4 11 10.9 15.1 7.3M4.7 5.6V15M8.2 4.6V13.9M11.7 3.4V12.6" fill="none" stroke="#5a5674" stroke-width=".9" opacity=".85"/></svg>
  <div class="t lcd" style="left:29px;top:12px;font-size:12px">Edit Shell Section</div>
  <div class="a" style="left:174px;top:9px;width:31px;height:17px;border:1px solid #4a1a22;border-radius:3px;background:linear-gradient(#e8b5aa 0,#d98b79 46%,#c0442a 50%,#cb5a40 80%,#d8826a 100%);box-shadow:inset 0 0 0 1px rgba(255,255,255,.38)">
    <svg class="a" style="left:9px;top:3px" width="12" height="10" viewBox="0 0 12 10"><path d="M.8 .9h3.3l1.9 2.2 1.9-2.2h3.3l-3.4 3.9 3.5 4.2h-3.4l-1.9-2.4-1.9 2.4h-3.4l3.5-4.2z" fill="#fbfbfb" stroke="#54504e" stroke-width=".9" stroke-linejoin="round"/></svg>
  </div>
  <div class="a cl">
    <!-- tabs -->
    <div class="a tab" style="left:2px;top:3px;width:64px;height:21px"></div>
    <div class="t" style="left:11px;top:10px">Edit Parts</div>
    <div class="a tab" style="left:67px;top:1px;width:60px;height:23px"></div>
    <div class="t" style="left:77px;top:9px">Reorient</div>
    <!-- panel border -->
    <div class="a hl" style="left:2px;top:23px;width:65px;height:1px"></div>
    <div class="a hl" style="left:127px;top:23px;width:71px;height:1px"></div>
    <div class="a hl" style="left:2px;top:23px;width:1px;height:356px"></div>
    <div class="a dk" style="left:197px;top:24px;width:1px;height:355px"></div>
    <div class="a dk" style="left:2px;top:378px;width:196px;height:1px"></div>
    <div class="t" style="left:12px;top:29px">Set local origin:</div>
    <div class="rad" style="left:13px;top:46px"></div><div class="t" style="left:31px;top:48px">At origin</div>
    <div class="rad" style="left:13px;top:65px"></div><div class="t" style="left:31px;top:67px">At centroid</div>
    <div class="rad" style="left:13px;top:83px"></div><div class="t" style="left:31px;top:85px">At shear center</div>
    <div class="rad" style="left:13px;top:101px"></div><div class="t" style="left:31px;top:104px">At vertex:</div>
    <div class="ent" style="left:88px;top:101px;width:25px;height:22px"></div>
    <div class="rad on" style="left:13px;top:130px"></div><div class="t" style="left:31px;top:133px">At point:</div>
    <div class="t" style="left:79px;top:137px">Y:</div>
    <div class="ent w" style="left:99px;top:130px;width:26px;height:22px"></div>
    <div class="t" style="left:132px;top:137px">Z:</div>
    <div class="ent w" style="left:152px;top:130px;width:25px;height:22px"></div>
    <div class="t" style="left:12px;top:160px">Set y-axis:</div>
    <div class="rad" style="left:13px;top:178px"></div><div class="t" style="left:31px;top:181px">Same as current</div>
    <div class="rad" style="left:13px;top:199px"></div><div class="t" style="left:31px;top:202px">Origin to vertex:</div>
    <div class="ent" style="left:117px;top:199px;width:25px;height:22px"></div>
    <div class="rad" style="left:13px;top:228px"></div><div class="t" style="left:31px;top:231px">Vertex:</div>
    <div class="ent" style="left:73px;top:228px;width:25px;height:22px"></div>
    <div class="t" style="left:106px;top:235px">to vertex:</div>
    <div class="ent" style="left:161px;top:228px;width:25px;height:22px"></div>
    <div class="rad on" style="left:13px;top:257px"></div><div class="t" style="left:31px;top:260px">Rotate by angle:</div>
    <div class="ent w" style="left:121px;top:257px;width:25px;height:22px"><div class="t" style="left:5px;top:6px">90</div></div>
    <div class="t" style="left:155px;top:260px">degrees</div>
    <div class="t" style="left:12px;top:285px">Reflect section:</div>
    <div class="chk" style="left:13px;top:306px"></div><div class="t" style="left:31px;top:308px">Flip horizontal</div>
    <div class="chk" style="left:13px;top:330px"></div><div class="t" style="left:31px;top:332px">Flip vertical</div>
    <div class="btn" style="left:130px;top:347px">Reorient</div>
    <div class="btn" style="left:134px;top:384px">Exit</div>
  </div>
</div>
</body></html>
